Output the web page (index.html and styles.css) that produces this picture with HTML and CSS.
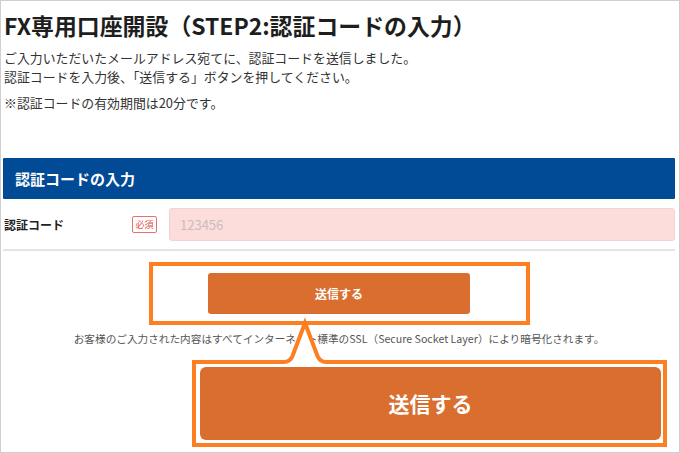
FILE: index.html
```html
<!DOCTYPE html>
<html lang="ja">
<head>
<meta charset="utf-8">
<link rel="stylesheet" href="styles.css">
</head>
<body>
<div class="frame">
  <h1 class="title">FX専用口座開設（STEP2:認証コードの入力）</h1>
  <p class="lead">ご入力いただいたメールアドレス宛てに、認証コードを送信しました。<br>認証コードを入力後、「送信する」ボタンを押してください。</p>
  <p class="notice">※認証コードの有効期間は20分です。</p>

  <section class="form">
    <h2 class="form-head">認証コードの入力</h2>
    <div class="form-row">
      <span class="form-label">認証コード</span>
      <span class="badge">必須</span>
      <div class="input">123456</div>
    </div>
  </section>

  <div class="actions">
    <div class="btn">送信する</div>
  </div>
  <p class="ssl">お客様のご入力された内容はすべてインターネット標準のSSL（Secure Socket Layer）により暗号化されます。</p>

  <svg class="callout" width="680" height="453" viewBox="0 0 680 453">
    <rect x="151" y="264" width="377" height="59" fill="none" stroke="#fd7f22" stroke-width="4"/>
    <path d="M194 362 H284 Q290 362 292.5 356 L305 323 L317.5 356 Q320 362 326 362 H665 V445 H194 Z" fill="#fff" stroke="#fd7f22" stroke-width="4" stroke-linejoin="miter"/>
  </svg>
  <div class="btn-big">送信する</div>
</div>
</body>
</html>
```

FILE: styles.css
```css
html, body {
  margin: 0;
  padding: 0;
  background: #fff;
}

body {
  font-family: "Noto Sans CJK JP", "Noto Sans", sans-serif;
  color: #333;
}

.frame {
  position: relative;
  width: 680px;
  height: 453px;
  box-sizing: border-box;
  border: 1px solid #cfcfcf;
  padding: 0 4px 0 2px;
  overflow: hidden;
}

.title {
  margin: 9px 0 0 1px;
  font-size: 22.9px;
  line-height: 30px;
  font-weight: 700;
  color: #1e1e1e;
  letter-spacing: 0;
  white-space: nowrap;
}

.lead {
  margin: 8px 0 0 1px;
  font-size: 12.9px;
  line-height: 19px;
  color: #333;
}

.notice {
  margin: 7px 0 0 1px;
  font-size: 12.9px;
  line-height: 19px;
  color: #333;
}

.form {
  margin-top: 46px;
}

.form-head {
  margin: 0;
  height: 41px;
  background: #004a96;
  color: #fff;
  font-size: 15px;
  font-weight: 700;
  line-height: 41px;
  padding-left: 12px;
  border-radius: 1px;
}

.form-row {
  display: flex;
  align-items: center;
  padding: 9px 0 8px 1px;
  border-bottom: 2px solid #e4e4e4;
}

.form-label {
  width: 128px;
  font-size: 12px;
  font-weight: 700;
  color: #222;
}

.badge {
  box-sizing: border-box;
  width: 25px;
  height: 17px;
  border: 1px solid #e8706e;
  border-radius: 2px;
  color: #e0504e;
  font-size: 9px;
  line-height: 15px;
  text-align: center;
  margin-right: 12px;
}

.input {
  flex: 1;
  box-sizing: border-box;
  height: 33px;
  background: #fddcdc;
  border: 1px solid #f0d4d4;
  border-radius: 3px;
  color: #c9bcbc;
  font-size: 13px;
  line-height: 31px;
  padding-left: 10px;
}

.actions {
  display: flex;
  justify-content: center;
  margin-top: 22px;
}

.btn {
  width: 262px;
  height: 41px;
  background: #d96e2f;
  border-radius: 3px;
  color: #fff;
  font-size: 12px;
  font-weight: 700;
  line-height: 41px;
  text-align: center;
}

.ssl {
  margin: 17px 0 0;
  font-size: 10.65px;
  line-height: 16px;
  color: #555;
  text-align: center;
  white-space: nowrap;
}

.callout {
  position: absolute;
  left: -1px;
  top: -1px;
}

.btn-big {
  position: absolute;
  left: 199px;
  top: 366px;
  width: 461px;
  height: 73px;
  background: #d96e2f;
  border-radius: 6px;
  color: #fff;
  font-size: 21px;
  font-weight: 700;
  line-height: 73px;
  text-align: center;
}
```
